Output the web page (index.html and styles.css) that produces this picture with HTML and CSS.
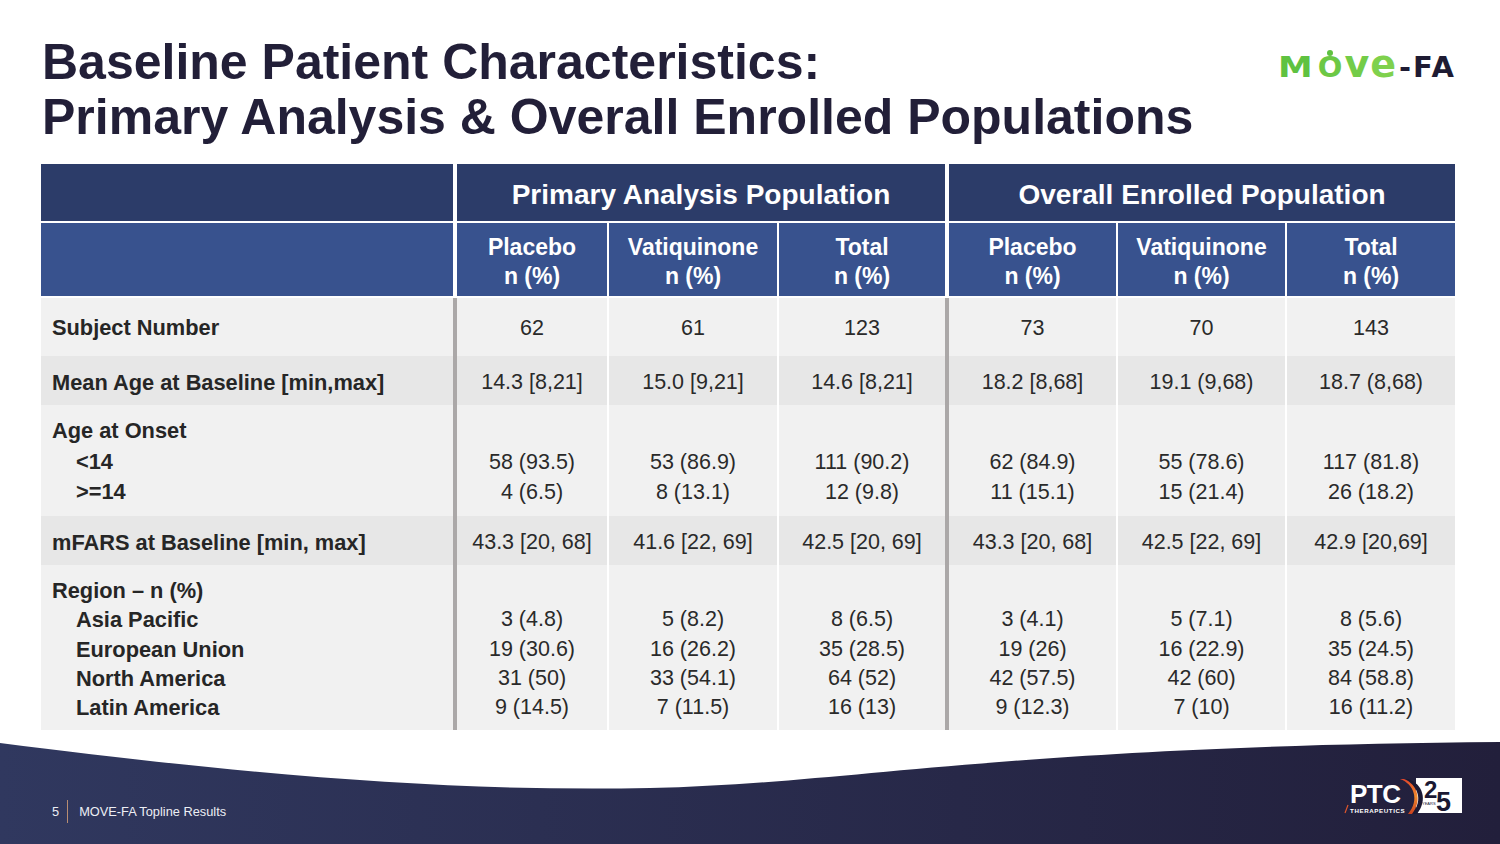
FILE: index.html
```html
<!DOCTYPE html>
<html lang="en">
<head>
<meta charset="utf-8">
<title>Baseline Patient Characteristics</title>
<link rel="stylesheet" href="styles.css">
</head>
<body>
<div class="slide">
  <header class="top">
    <h1 class="title">Baseline Patient Characteristics:<br>Primary Analysis &amp; Overall Enrolled Populations</h1>
    <div class="logo" aria-label="MOVE-FA">
      <span class="lg-move"><span class="lg-m">M</span><span class="lg-o">O</span><span class="lg-v">v</span><span class="lg-e">e</span></span><span class="lg-fa">-FA</span>
    </div>
  </header>

  <main class="content">
    <table class="data">
      <colgroup>
        <col class="c-label"><col class="c-p1"><col class="c-v1"><col class="c-t1"><col class="c-p2"><col class="c-v2"><col class="c-t2">
      </colgroup>
      <thead>
        <tr class="group-row">
          <th class="blank"></th>
          <th colspan="3" class="sep">Primary Analysis Population</th>
          <th colspan="3" class="sep">Overall Enrolled Population</th>
        </tr>
        <tr class="sub-row">
          <th class="blank"></th>
          <th class="sep">Placebo<br>n (%)</th>
          <th>Vatiquinone<br>n (%)</th>
          <th>Total<br>n (%)</th>
          <th class="sep">Placebo<br>n (%)</th>
          <th>Vatiquinone<br>n (%)</th>
          <th>Total<br>n (%)</th>
        </tr>
      </thead>
      <tbody>
        <tr class="light r-subject">
          <th class="label">Subject Number</th>
          <td class="sep">62</td><td>61</td><td>123</td>
          <td class="sep">73</td><td>70</td><td>143</td>
        </tr>
        <tr class="dark r-single">
          <th class="label">Mean Age at Baseline [min,max]</th>
          <td class="sep">14.3 [8,21]</td><td>15.0 [9,21]</td><td>14.6 [8,21]</td>
          <td class="sep">18.2 [8,68]</td><td>19.1 (9,68)</td><td>18.7 (8,68)</td>
        </tr>
        <tr class="light r-onset">
          <th class="label"><div>Age at Onset</div><div class="sub">&lt;14</div><div class="sub">&gt;=14</div></th>
          <td class="sep"><div>&nbsp;</div><div>58 (93.5)</div><div>4 (6.5)</div></td>
          <td><div>&nbsp;</div><div>53 (86.9)</div><div>8 (13.1)</div></td>
          <td><div>&nbsp;</div><div>111 (90.2)</div><div>12 (9.8)</div></td>
          <td class="sep"><div>&nbsp;</div><div>62 (84.9)</div><div>11 (15.1)</div></td>
          <td><div>&nbsp;</div><div>55 (78.6)</div><div>15 (21.4)</div></td>
          <td><div>&nbsp;</div><div>117 (81.8)</div><div>26 (18.2)</div></td>
        </tr>
        <tr class="dark r-single">
          <th class="label">mFARS at Baseline [min, max]</th>
          <td class="sep">43.3 [20, 68]</td><td>41.6 [22, 69]</td><td>42.5 [20, 69]</td>
          <td class="sep">43.3 [20, 68]</td><td>42.5 [22, 69]</td><td>42.9 [20,69]</td>
        </tr>
        <tr class="light r-region">
          <th class="label"><div>Region – n (%)</div><div class="sub">Asia Pacific</div><div class="sub">European Union</div><div class="sub">North America</div><div class="sub">Latin America</div></th>
          <td class="sep"><div>&nbsp;</div><div>3 (4.8)</div><div>19 (30.6)</div><div>31 (50)</div><div>9 (14.5)</div></td>
          <td><div>&nbsp;</div><div>5 (8.2)</div><div>16 (26.2)</div><div>33 (54.1)</div><div>7 (11.5)</div></td>
          <td><div>&nbsp;</div><div>8 (6.5)</div><div>35 (28.5)</div><div>64 (52)</div><div>16 (13)</div></td>
          <td class="sep"><div>&nbsp;</div><div>3 (4.1)</div><div>19 (26)</div><div>42 (57.5)</div><div>9 (12.3)</div></td>
          <td><div>&nbsp;</div><div>5 (7.1)</div><div>16 (22.9)</div><div>42 (60)</div><div>7 (10)</div></td>
          <td><div>&nbsp;</div><div>8 (5.6)</div><div>35 (24.5)</div><div>84 (58.8)</div><div>16 (11.2)</div></td>
        </tr>
      </tbody>
    </table>
  </main>

  <footer class="foot">
    <svg class="wave" width="1500" height="114" viewBox="0 0 1500 114" preserveAspectRatio="none" aria-hidden="true">
      <defs>
        <linearGradient id="wg" x1="0" y1="0" x2="1" y2="0">
          <stop offset="0" stop-color="#30385f"/>
          <stop offset="1" stop-color="#221f3b"/>
        </linearGradient>
      </defs>
      <path d="M0,13 C250,45 450,62 650,58 C850,54 1000,16 1500,12 L1500,114 L0,114 Z" fill="url(#wg)"/>
    </svg>
    <div class="meta">
      <span class="pg">5</span>
      <span class="meta-sep"></span>
      <span class="meta-title">MOVE-FA Topline Results</span>
    </div>
    <svg class="ptc" width="118" height="46" viewBox="0 -4 118 46" aria-label="PTC Therapeutics 25 years">
      <defs>
        <linearGradient id="arc" x1="0" y1="0" x2="0" y2="1">
          <stop offset="0" stop-color="#e0452a"/>
          <stop offset="0.5" stop-color="#f08a2c"/>
          <stop offset="1" stop-color="#c8401f"/>
        </linearGradient>
      </defs>
      <rect x="72" y="0" width="46" height="35" fill="#ffffff"/>
      <path d="M58,1 C74,6 80,22 68,36 L73,36 C84,22 79,6 64,1 Z" fill="#1a1833"/>
      <path d="M56,1 C70,6 76,22 64,36 L68,36 C79,22 73,6 60,1 Z" fill="url(#arc)"/>
      <text x="6" y="25" class="ptc-word">PTC</text>
      <text x="6" y="34.5" class="ptc-sub">THERAPEUTICS</text>
      <path d="M1,35 L4,27" stroke="#e2572b" stroke-width="1.2"/>
      <text x="80" y="20" class="ptc-2">2</text>
      <text x="92" y="33" class="ptc-5">5</text>
      <text x="78" y="27" class="ptc-y">YEARS</text>
    </svg>
  </footer>
</div>
</body>
</html>
```

FILE: styles.css
```css
html, body {
  margin: 0;
  padding: 0;
  background: #ffffff;
}

body {
  font-family: "Liberation Sans", Arial, sans-serif;
  color: #262626;
}

.slide {
  width: 1500px;
  height: 844px;
  display: flex;
  flex-direction: column;
  overflow: hidden;
  background: #ffffff;
}

/* ---------- header ---------- */
.top {
  height: 164px;
  box-sizing: border-box;
  padding: 35px 44px 0 42px;
  display: flex;
  justify-content: space-between;
  align-items: flex-start;
}

.title {
  margin: 0;
  font-size: 50px;
  line-height: 55px;
  font-weight: 700;
  color: #221f38;
}

.logo {
  margin-top: 10px;
  display: flex;
  align-items: baseline;
  font-family: "DejaVu Sans", "Liberation Sans", sans-serif;
  font-weight: 700;
  line-height: 1;
  white-space: nowrap;
}

.lg-move {
  display: flex;
  align-items: baseline;
  color: #5fc241;
}

.lg-m {
  font-size: 29px;
  transform: scaleX(1.2);
  display: inline-block;
  margin-right: 8px;
  margin-left: 3px;
}

.lg-o {
  font-size: 29px;
  position: relative;
  display: inline-block;
  margin-right: 2px;
  color: #6cc845;
}

.lg-o::before {
  content: "";
  position: absolute;
  left: 50%;
  top: -3px;
  width: 6px;
  height: 6px;
  margin-left: -3px;
  border-radius: 50%;
  background: #5fc241;
}

.lg-v {
  font-size: 38px;
  margin-right: 1px;
  color: #73cc48;
}

.lg-e {
  font-size: 38px;
  color: #7fd14d;
}

.lg-fa {
  font-size: 29px;
  color: #1e1b33;
  letter-spacing: 2px;
  margin-left: 3px;
}

/* ---------- table ---------- */
.content {
  padding-left: 41px;
}

.data {
  width: 1414px;
  table-layout: fixed;
  border-collapse: separate;
  border-spacing: 0;
}

.c-label { width: 412px; }
.c-p1 { width: 154px; }
.c-v1 { width: 170px; }
.c-t1 { width: 168px; }
.c-p2 { width: 171px; }
.c-v2 { width: 169px; }
.c-t2 { width: 170px; }

.data th,
.data td {
  box-sizing: border-box;
  padding: 0;
  border-left: 2px solid #ffffff;
  text-align: center;
}

.data th:first-child,
.data td:first-child {
  border-left: 0;
}

.data thead th {
  color: #ffffff;
  font-weight: 700;
  border-bottom: 2px solid #ffffff;
}

.data thead .sep {
  border-left: 4px solid #ffffff;
}

.group-row th {
  background: #2c3c69;
  height: 59px;
  font-size: 28px;
  line-height: 30px;
  padding-top: 5px;
}

.sub-row th {
  background: #38528e;
  height: 75px;
  font-size: 23px;
  line-height: 29px;
  padding-top: 4px;
}

.data tbody .sep {
  border-left: 4px solid #aba8a8;
}

.data tbody th,
.data tbody td {
  font-size: 21.5px;
  color: #262626;
}

.data tbody td {
  font-weight: 400;
  color: #2a2a2a;
}

.data tbody .label {
  text-align: left;
  padding-left: 11px;
  font-weight: 700;
  font-size: 21.8px;
}

.label .sub {
  padding-left: 24px;
}

.light th, .light td { background: #f1f1f1; }
.dark th, .dark td { background: #e7e7e7; }

.r-subject th, .r-subject td {
  height: 58px;
  vertical-align: middle;
  padding-top: 2px;
}

.r-single th, .r-single td {
  height: 49px;
  vertical-align: middle;
  padding-top: 4px;
}

.r-onset th, .r-onset td {
  height: 111px;
  vertical-align: top;
  padding-top: 11px;
  line-height: 30.5px;
}

.r-region th, .r-region td {
  height: 165px;
  vertical-align: top;
  padding-top: 11px;
  line-height: 29.3px;
}

/* ---------- footer ---------- */
.foot {
  position: relative;
  margin-top: auto;
  height: 114px;
  box-sizing: border-box;
  padding: 44px 38px 0 52px;
  display: flex;
  justify-content: space-between;
  align-items: flex-start;
}

.wave {
  position: absolute;
  left: 0;
  top: 0;
  z-index: 0;
}

.meta {
  position: relative;
  z-index: 1;
  margin-top: 26px;
  display: flex;
  align-items: center;
  height: 23px;
  font-size: 12.8px;
  color: #eceef4;
}

.meta-sep {
  width: 1px;
  height: 23px;
  background: #b88d72;
  margin: 0 11px 0 8px;
}

.ptc {
  position: relative;
  z-index: 1;
  display: block;
}

.ptc-word {
  font-family: "Liberation Sans", Arial, sans-serif;
  font-weight: 700;
  font-size: 26px;
  fill: #ffffff;
  letter-spacing: -0.5px;
}

.ptc-sub {
  font-family: "Liberation Sans", Arial, sans-serif;
  font-weight: 700;
  font-size: 6.2px;
  fill: #ffffff;
  letter-spacing: 0.6px;
}

.ptc-2 {
  font-family: "Liberation Sans", Arial, sans-serif;
  font-weight: 700;
  font-size: 24px;
  fill: #1a1833;
}

.ptc-5 {
  font-family: "Liberation Sans", Arial, sans-serif;
  font-weight: 700;
  font-size: 27px;
  fill: #1a1833;
}

.ptc-y {
  font-family: "Liberation Sans", Arial, sans-serif;
  font-size: 4px;
  fill: #1a1833;
}
```
